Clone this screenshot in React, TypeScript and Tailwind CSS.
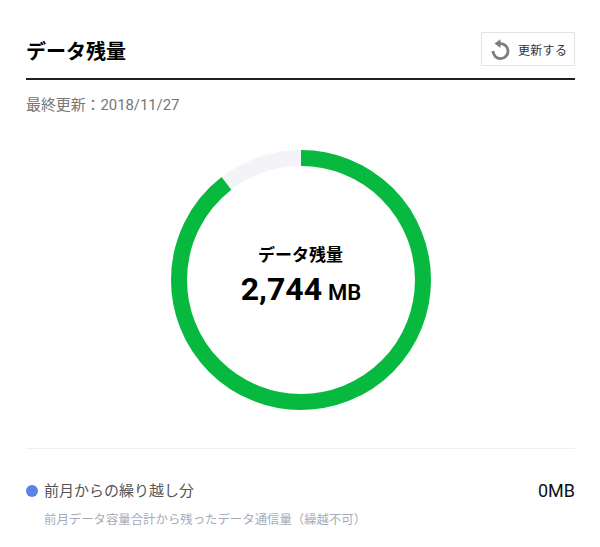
const font = "font-['Roboto','Noto_Sans_CJK_JP',sans-serif]";

const RING_RADIUS = 122;
const RING_LENGTH = 2 * Math.PI * RING_RADIUS;
const remaining = 0.895;

const RefreshIcon = () => (
    <svg width="20" height="22" viewBox="0 0 20 22" fill="none">
        <path d="M9 5.6 A7.5 7.5 0 1 1 2 13" stroke="#7d7d7d" strokeWidth="2.8" />
        <path d="M3.5 5.6 L9.5 1.2 L9.5 10 Z" fill="#7d7d7d" />
    </svg>
);

const Ring = () => (
    <svg width="260" height="260" viewBox="0 0 260 260" className="block">
        <circle cx="130" cy="130" r={RING_RADIUS} fill="none" stroke="#f3f4f8" strokeWidth="16" />
        <circle
            cx="130"
            cy="130"
            r={RING_RADIUS}
            fill="none"
            stroke="#07ba3f"
            strokeWidth="16"
            strokeDasharray={`${RING_LENGTH * remaining} ${RING_LENGTH}`}
            transform="rotate(-90 130 130)"
        />
    </svg>
);

export default function App() {
    return (
        <div className={`${font} h-[547px] w-[600px] overflow-hidden bg-white pr-[25px] pl-[26px] text-black`}>
            <div className="flex h-[80px] items-start justify-between border-b-2 border-[#222] pt-[32px]">
                <h2 className="mt-[4px] text-[20px] leading-[32px] font-bold">データ残量</h2>
                <button className="flex h-[34px] w-[94px] items-center gap-[7px] border border-[#e3e3e3] pl-[9px] text-[12px] tracking-[0.3px] text-[#333]">
                    <RefreshIcon />
                    <span className="pt-[3px]">更新する</span>
                </button>
            </div>
            <p className="mt-[15px] text-[15px] leading-[20px] tracking-[-0.1px] text-[#777]">最終更新：2018/11/27</p>
            <div className="mt-[35px] flex justify-center">
                <div className="relative h-[260px] w-[260px]">
                    <Ring />
                    <div className="absolute inset-0 flex flex-col items-center justify-center pb-[5px]">
                        <span className="text-[17px] leading-[24px] font-bold">データ残量</span>
                        <span className="mt-[3px] flex items-baseline gap-[6px] pl-[1px] text-[32px] leading-[38px] font-bold">
                            2,744 <span className="text-[22px] font-semibold">MB</span>
                        </span>
                    </div>
                </div>
            </div>
            <div className="mt-[38px] border-t border-[#f0f0f0] pt-[31px]">
                <div className="flex items-center justify-between">
                    <div className="flex items-center gap-[6px]">
                        <span className="h-[12px] w-[12px] rounded-full bg-[#5b83e6]" />
                        <span className="text-[15px] leading-[22px] text-[#555]">前月からの繰り越し分</span>
                    </div>
                    <span className="text-[18px] leading-[22px] text-[#111]">0MB</span>
                </div>
                <p className="mt-[9px] pl-[18px] text-[12.4px] leading-[18px] text-[#a6abb8]">
                    前月データ容量合計から残ったデータ通信量（繰越不可）
                </p>
            </div>
        </div>
    );
}
